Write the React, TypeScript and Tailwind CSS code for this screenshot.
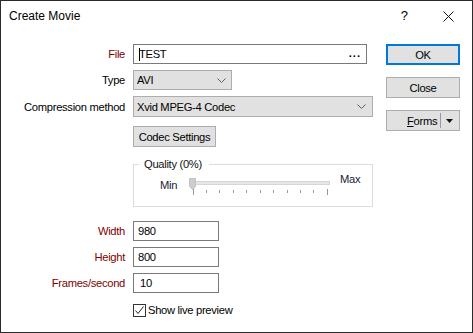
import React from "react";

const Chevron = () => (
  <svg width="9" height="5" viewBox="0 0 9 5" className="shrink-0">
    <path d="M0.5 0.5 L4.5 4.5 L8.5 0.5" fill="none" stroke="#606060" strokeWidth="1" />
  </svg>
);

const Slider = () => {
  const ticks = Array.from({ length: 11 }, (_, i) => 4.5 + i * 13.44);
  return (
    <svg width="144" height="20" viewBox="0 0 144 20" className="shrink-0">
      <rect x="4.5" y="4.5" width="137" height="3" fill="#e7e7e7" stroke="#d6d6d6" />
      <path d="M1.5 1.5 H7.5 V9.5 L4.5 12.5 L1.5 9.5 Z" fill="#cdcdcd" stroke="#c2c2c2" />
      {ticks.map((x, i) => (
        <line
          key={i}
          x1={Math.round(x) + 0.5}
          x2={Math.round(x) + 0.5}
          y1={i === 0 || i === 10 ? 12 : 13}
          y2={i === 0 || i === 10 ? 18 : 16}
          stroke="#9a9a9a"
          strokeWidth="1"
        />
      ))}
    </svg>
  );
};

const Label = ({ children, red }: { children: React.ReactNode; red?: boolean }) => (
  <div className={`w-[125px] shrink-0 text-right pr-[1px] ${red ? "text-[#800000]" : "text-black"}`}>{children}</div>
);

export default function App() {
  return (
    <div className="w-[473px] h-[333px] bg-white border border-[#2b2b2b] flex flex-col text-[11.2px] tracking-[-0.3px] leading-[14px] text-black font-['Liberation_Sans',Arial,sans-serif] overflow-hidden">
      {/* Title bar */}
      <div className="h-[30px] shrink-0 flex items-center tracking-normal">
        <span className="ml-[8px] text-[12px]">Create Movie</span>
        <span className="ml-auto mr-[35px] text-[13px]">?</span>
        <svg width="11" height="11" viewBox="0 0 11 11" className="mr-[18px]">
          <path d="M0.5 0.5 L10.5 10.5 M10.5 0.5 L0.5 10.5" stroke="#111" strokeWidth="1" />
        </svg>
      </div>

      <div className="flex flex-row">
        {/* Left form column */}
        <div className="w-[372px] shrink-0 flex flex-col">
          <div className="mt-[13px] h-[20px] flex items-center gap-[7px]">
            <Label red>File</Label>
            <div className="w-[234px] h-[20px] border border-[#7a7a7a] flex items-center pl-[5px] pr-[5px] bg-white">
              <span className="w-px h-[13px] bg-black -mr-[1px]" />
              <span>TEST</span>
              <span className="ml-auto font-bold tracking-[1px] -mt-[2px]">...</span>
            </div>
          </div>

          <div className="mt-[6px] h-[20px] flex items-center gap-[7px]">
            <Label>Type</Label>
            <div className="w-[99px] h-[20px] border border-[#adadad] bg-[#e1e1e1] flex items-center pl-[3px] pr-[5px]">
              <span>AVI</span>
              <span className="ml-auto"><Chevron /></span>
            </div>
          </div>

          <div className="mt-[6px] h-[21px] flex items-center gap-[7px]">
            <Label>Compression method</Label>
            <div className="w-[240px] h-[21px] border border-[#adadad] bg-[#e1e1e1] flex items-center pl-[3px] pr-[6px]">
              <span>Xvid MPEG-4 Codec</span>
              <span className="ml-auto"><Chevron /></span>
            </div>
          </div>

          <div className="mt-[9px] ml-[132px]">
            <div className="w-[83px] h-[21px] border border-[#adadad] bg-[#e1e1e1] flex items-center justify-center">
              Codec Settings
            </div>
          </div>

          <fieldset className="mt-[10px] ml-[132px] w-[240px] h-[50px] border border-[#dcdcdc] p-0 m-0 min-w-0">
            <legend className="ml-[5px] px-[5px] pr-[7px] leading-[14px] text-[#111]">Quality (0%)</legend>
            <div className="flex items-start">
              <span className="ml-[26px] w-[28px] mt-[7px] text-[#1a1a3a]">Min</span>
              <div className="mt-[6px]"><Slider /></div>
              <span className="ml-[8px] mt-[1px] text-[#1a1a3a]">Max</span>
            </div>
          </fieldset>

          <div className="mt-[14px] h-[20px] flex items-center gap-[7px]">
            <Label red>Width</Label>
            <div className="w-[86px] h-[20px] border border-[#7a7a7a] flex items-center pl-[4px]">980</div>
          </div>
          <div className="mt-[6px] h-[20px] flex items-center gap-[7px]">
            <Label red>Height</Label>
            <div className="w-[86px] h-[20px] border border-[#7a7a7a] flex items-center pl-[4px]">800</div>
          </div>
          <div className="mt-[6px] h-[20px] flex items-center gap-[7px]">
            <Label red>Frames/second</Label>
            <div className="w-[86px] h-[20px] border border-[#7a7a7a] flex items-center pl-[6px]">10</div>
          </div>

          <div className="mt-[10px] ml-[132px] flex items-center gap-[2px]">
            <div className="w-[13px] h-[13px] border border-[#333] flex items-center justify-center">
              <svg width="11" height="11" viewBox="0 0 11 11">
                <path d="M1.5 5.5 L4 8.5 L9.5 1.5" fill="none" stroke="#222" strokeWidth="1" />
              </svg>
            </div>
            <span>Show live preview</span>
          </div>
        </div>

        {/* Right button column */}
        <div className="ml-[13px] w-[74px] flex flex-col">
          <div className="mt-[13px] h-[21px] border-2 border-[#0078d7] bg-[#e1e1e1] flex items-center justify-center">OK</div>
          <div className="mt-[12px] h-[21px] border border-[#adadad] bg-[#e1e1e1] flex items-center justify-center">Close</div>
          <div className="mt-[12px] h-[21px] border border-[#adadad] bg-[#e1e1e1] flex items-center">
            <span className="ml-[20px]"><span className="underline">F</span>orms</span>
            <span className="ml-auto w-px h-[15px] bg-[#9a9a9a]" />
            <svg width="8" height="4" viewBox="0 0 8 4" className="mx-[5px]">
              <path d="M0 0 H7 L3.5 4 Z" fill="#111" />
            </svg>
          </div>
        </div>
      </div>
    </div>
  );
}
